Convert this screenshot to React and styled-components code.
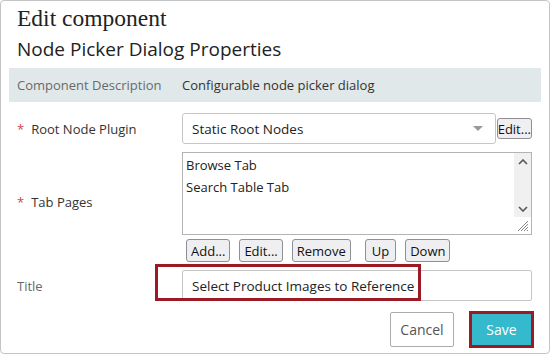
import React from "react";
import styled, { createGlobalStyle } from "styled-components";

const GlobalStyle = createGlobalStyle`
  body {
    margin: 0;
    font-family: "Open Sans", "Noto Sans", sans-serif;
    background: #fff;
  }
`;

const App = () => {
  return (
    <>
      <GlobalStyle />
      <StDialog>
        <StHeading>Edit component</StHeading>
        <StSubHeading>Node Picker Dialog Properties</StSubHeading>

        <StDescRow>
          <StDescLabel>Component Description</StDescLabel>
          <StDescValue>Configurable node picker dialog</StDescValue>
        </StDescRow>

        <StForm>
          <StLabel $required>Root Node Plugin</StLabel>
          <StControlRow>
            <StSelect>
              <span>Static Root Nodes</span>
              <StArrow />
            </StSelect>
            <StSmallBtn $tight>Edit...</StSmallBtn>
          </StControlRow>

          <StLabel $required $lift>Tab Pages</StLabel>
          <StControlCol>
            <StListBox>
              <StListItems>
                <div>Browse Tab</div>
                <div>Search Table Tab</div>
              </StListItems>
              <StScrollbar>
                <svg width="10" height="6" viewBox="0 0 10 6">
                  <path d="M1 5 L5 1 L9 5" fill="none" stroke="#555" strokeWidth="1.6" />
                </svg>
                <svg width="10" height="6" viewBox="0 0 10 6">
                  <path d="M1 1 L5 5 L9 1" fill="none" stroke="#555" strokeWidth="1.6" />
                </svg>
              </StScrollbar>
              <StGrip width="12" height="12" viewBox="0 0 12 12">
                <path d="M11 1 L1 11 M11 4 L4 11 M11 7 L7 11 M11 10 L10 11" stroke="#888" strokeWidth="1" />
              </StGrip>
            </StListBox>
            <StBtnRow>
              <StSmallBtn>Add...</StSmallBtn>
              <StSmallBtn>Edit...</StSmallBtn>
              <StSmallBtn>Remove</StSmallBtn>
              <StSmallBtn $gapLeft $wide>Up</StSmallBtn>
              <StSmallBtn>Down</StSmallBtn>
            </StBtnRow>
          </StControlCol>

          <StLabel $muted>Title</StLabel>
          <StTitleCell>
            <StInput>Select Product Images to Reference</StInput>
            <StHighlight $left={-27} $top={-6} $width={266} $height={37} />
          </StTitleCell>
        </StForm>

        <StFooter>
          <StCancelBtn>Cancel</StCancelBtn>
          <StSaveWrap>
            <StSaveBtn>Save</StSaveBtn>
          </StSaveWrap>
        </StFooter>
      </StDialog>
    </>
  );
};

export default App;

const StDialog = styled.div`
  width: 550px;
  height: 354px;
  box-sizing: border-box;
  border: 1px solid #c4c4c4;
  border-radius: 4px;
  padding: 0 8px 0 8px;
  display: flex;
  flex-direction: column;
  overflow: hidden;
`;

const StHeading = styled.h1`
  margin: 2px 0 0 8px;
  font-family: "Liberation Serif", "DejaVu Serif", serif;
  font-weight: 400;
  font-size: 23.5px;
  line-height: 30px;
  color: #222;
`;

const StSubHeading = styled.h2`
  margin: 2px 0 0 8px;
  font-weight: 400;
  font-size: 19px;
  line-height: 28px;
  color: #222;
`;

const StDescRow = styled.div`
  margin-top: 5px;
  height: 34px;
  background: #e0e8ea;
  display: grid;
  grid-template-columns: 173px 1fr;
  align-items: center;
  font-size: 13px;
`;

const StDescLabel = styled.div`
  padding-left: 8px;
  color: #6a6a6a;
`;

const StDescValue = styled.div`
  color: #333;
`;

const StForm = styled.div`
  margin-top: 11px;
  display: grid;
  grid-template-columns: 173px 350px;
  row-gap: 8px;
  align-items: center;
  font-size: 13px;
`;

const StLabel = styled.div`
  padding-left: 8px;
  padding-bottom: ${(p) => (p.$lift ? "11px" : "0")};
  color: ${(p) => (p.$muted ? "#6a6a6a" : "#333")};
  &::before {
    content: ${(p) => (p.$required ? '"*"' : "none")};
    color: #d0454c;
    margin-right: 7px;
  }
`;

const StControlRow = styled.div`
  display: flex;
  align-items: center;
  gap: 1px;
`;

const StSelect = styled.div`
  flex: 1;
  height: 31px;
  box-sizing: border-box;
  border: 1px solid #c6c6c6;
  border-radius: 3px;
  display: flex;
  align-items: center;
  justify-content: space-between;
  padding: 0 12px 0 9px;
  color: #222;
  font-size: 13.5px;
`;

const StArrow = styled.span`
  width: 0;
  height: 0;
  border-left: 5px solid transparent;
  border-right: 5px solid transparent;
  border-top: 5px solid #9a9a9a;
`;

const StSmallBtn = styled.button`
  height: ${(p) => (p.$tight ? "21px" : "23px")};
  padding: ${(p) => (p.$tight ? "0" : p.$wide ? "0 6px" : "0 4px")};
  font-family: inherit;
  font-size: 13px;
  color: #111;
  background: #efeff2;
  border: 1px solid #8f8f95;
  border-radius: 3px;
  margin-left: ${(p) => (p.$gapLeft ? "5px" : "0")};
`;

const StControlCol = styled.div`
  display: flex;
  flex-direction: column;
  gap: 4px;
`;

const StListBox = styled.div`
  position: relative;
  height: 83px;
  box-sizing: border-box;
  border: 1px solid #b4b4b4;
  display: flex;
`;

const StListItems = styled.div`
  flex: 1;
  padding: 1px 3px;
  line-height: 22px;
  color: #222;
`;

const StScrollbar = styled.div`
  width: 17px;
  height: 64px;
  background: #f0f0f0;
  display: flex;
  flex-direction: column;
  justify-content: space-between;
  align-items: center;
  padding: 6px 0 5px;
  box-sizing: border-box;
`;

const StGrip = styled.svg`
  position: absolute;
  right: 2px;
  bottom: 2px;
`;

const StBtnRow = styled.div`
  display: flex;
  gap: 9px;
  padding-left: 4px;
`;

const StTitleCell = styled.div`
  position: relative;
`;

const StInput = styled.div`
  height: 31px;
  box-sizing: border-box;
  border: 1px solid #c6c6c6;
  border-radius: 2px;
  display: flex;
  align-items: center;
  padding-left: 9px;
  font-size: 13.5px;
  color: #222;
`;

const StHighlight = styled.div`
  position: absolute;
  left: ${(p) => p.$left}px;
  top: ${(p) => p.$top}px;
  width: ${(p) => p.$width}px;
  height: ${(p) => p.$height}px;
  box-sizing: border-box;
  border: 3px solid #9c1a23;
  pointer-events: none;
`;

const StFooter = styled.div`
  margin-top: 10px;
  display: flex;
  justify-content: flex-end;
  align-items: center;
  gap: 15px;
  padding-right: 7px;
`;

const StCancelBtn = styled.button`
  width: 64px;
  height: 35px;
  font-family: inherit;
  font-size: 14px;
  color: #555;
  background: #fff;
  border: 1px solid #ababab;
  border-radius: 2px;
`;

const StSaveWrap = styled.div`
  border: 3px solid #9c1a23;
`;

const StSaveBtn = styled.button`
  display: block;
  width: 59px;
  height: 31px;
  font-family: inherit;
  font-size: 14px;
  color: #fff;
  background: #35b9cc;
  border: none;
`;
